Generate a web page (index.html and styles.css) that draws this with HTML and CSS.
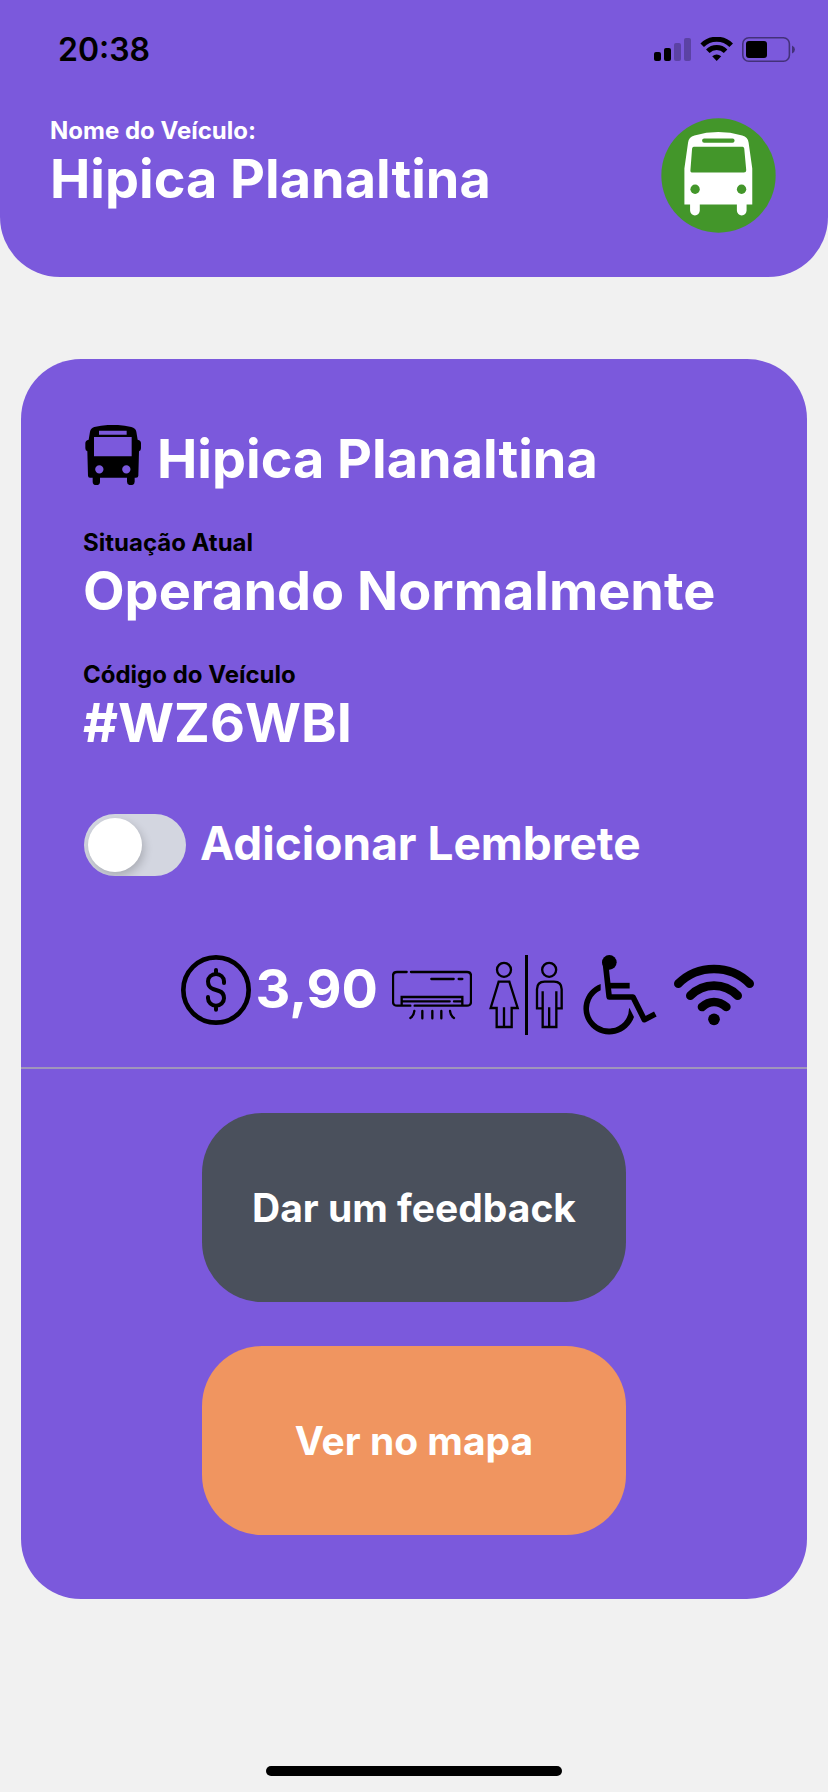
FILE: index.html
```
<!DOCTYPE html>
<html lang="pt-BR">
<head>
<meta charset="utf-8">
<meta name="viewport" content="width=device-width, initial-scale=1">
<title>Hipica Planaltina</title>
<link rel="stylesheet" href="styles.css">
</head>
<body class="screen">
<header class="header">
  <div class="status">
    <time class="status-time">20:38</time>
    <svg class="status-icons" viewBox="0 0 142 26" aria-hidden="true">
      <rect x="0" y="15" width="7" height="9" rx="2"/>
      <rect x="10" y="11" width="7" height="13" rx="2"/>
      <g opacity=".25"><rect x="20" y="6" width="7" height="18" rx="2"/><rect x="30" y="1" width="7" height="23" rx="2"/></g>
      <path d="M48.200 8.200A20.500 20.500 0 0 1 77.200 8.200" fill="none" stroke="#000" stroke-width="5"/>
      <path d="M53.800 14.200A12.600 12.600 0 0 1 71.600 14.200" fill="none" stroke="#000" stroke-width="5"/>
      <path d="M58.200 19.200Q62.700 15.600 67.200 19.200L62.700 24Z"/>
      <rect x="88.800" y=".8" width="46.600" height="23.400" rx="6" fill="none" stroke="#000" stroke-width="1.600" opacity=".45"/>
      <path d="M138 8.500Q141 10 141 12.500Q141 15 138 16.500Z" opacity=".45"/>
      <rect x="92" y="4" width="21" height="17" rx="3"/>
    </svg>
  </div>
  <div class="vehicle">
    <div>
      <p class="label label-light">Nome do Veículo:</p>
      <h1 class="title">Hipica Planaltina</h1>
    </div>
    <svg class="badge" viewBox="183 355 344 344" role="img" aria-label="Ônibus">
      <circle cx="355" cy="527" r="171" fill="#43962a"/>
      <path fill="#fff" d="M253 614V506L264 428Q266 412 283 407Q354 387 426 407Q443 412 445 428L456 506V614H439V632A14.500 14.500 0 0 1 410 632V614H299V632A14.500 14.500 0 0 1 270 632V614Z"/>
      <g fill="#43962a"><rect x="306" y="416" width="97" height="13" rx="6"/><path d="M281 441H427Q431 441 432 446L438 511Q438 518 431 518H278Q270 518 271 511L276 446Q277 441 281 441Z"/><circle cx="285" cy="568" r="14"/><circle cx="424" cy="568" r="14"/></g>
    </svg>
  </div>
</header>

<main class="card">
  <section class="details">
    <div class="route">
      <svg class="route-icon" viewBox="252 255 180 180" aria-hidden="true">
        <path fill-rule="evenodd" d="M286 261Q342 248 397 261Q410 265 412 275L416 299Q426 301 426 310V325Q426 332 420 334L418 407Q418 413 411 413H407V425A11 10 0 0 1 384 425V413H303V425A11 10 0 0 1 281 425V413H273Q267 413 267 407L265 334Q259 332 259 325V310Q259 301 269 299L273 275Q275 265 286 261ZM300 272V284H383V272ZM285 291V349H398V291ZM301 375.500A12.500 12.500 0 1 0 301 400.500A12.500 12.500 0 1 0 301 375.500ZM382 375.500A12.500 12.500 0 1 0 382 400.500A12.500 12.500 0 1 0 382 375.500Z"/>
      </svg>
      <h2 class="title">Hipica Planaltina</h2>
    </div>
    <div>
      <p class="label">Situação Atual</p>
      <p class="title">Operando Normalmente</p>
    </div>
    <div>
      <p class="label">Código do Veículo</p>
      <p class="title">#WZ6WBI</p>
    </div>
  </section>

  <div class="reminder">
    <input class="switch" type="checkbox" role="switch" id="reminder">
    <label class="reminder-label" for="reminder">Adicionar Lembrete</label>
  </div>

  <div class="amenities">
    <div class="fare">
      <svg class="fare-icon" viewBox="66 75 210 210" aria-hidden="true" fill="none" stroke="#000" stroke-width="12" stroke-linecap="round">
        <circle cx="171" cy="180" r="98" stroke-width="14"/>
        <path d="M195 159V154A24 22 0 0 0 171 132A24 22 0 0 0 147 154Q147 172 162 177L180 183Q195 188 195 205A24 22 0 0 1 171 227A24 22 0 0 1 147 205V201M171 120V132M171 228V239"/>
      </svg>
      <span class="title">3,90</span>
    </div>
    <svg class="amenity" viewBox="66 75 240 240" role="img" aria-label="Ar-condicionado" fill="none" stroke="#000" stroke-width="7" stroke-linecap="round">
      <path d="M110 126H81Q69 126 69 138V215Q69 227 81 227H121M123 126H291Q303 126 303 138V215Q303 227 291 227H134M95 226V201H277V226M97 214H239M252 214H276M184 147H251M266 147H277"/>
      <path d="M133 243Q131 258 121 264M157 243V265M187 243V265M214 243V265M240 243Q242 258 252 264"/>
    </svg>
    <svg class="amenity" viewBox="348 75 240 240" role="img" aria-label="Banheiro" fill="none" stroke="#000" stroke-width="7">
      <path d="M469.500 75V315" stroke-width="9"/>
      <circle cx="402" cy="119.500" r="21"/><circle cx="537.500" cy="119.500" r="21"/>
      <path d="M386 155H418L443 234H425V291H380V234H362ZM402 232V291M518 184V291H559V184M537.500 232V291M518 235H501V178Q501 155 524 155H552Q575 155 575 178V235H559"/>
    </svg>
    <svg class="amenity" viewBox="60 75 240 240" role="img" aria-label="Acessível para cadeirantes" fill="none" stroke="#000" stroke-width="17">
      <circle cx="148" cy="97" r="22" fill="#000" stroke="none"/>
      <path d="M136 97L147.500 201H219L253 269L286 252" stroke-linejoin="round"/>
      <path d="M149 167H209"/>
      <path d="M122 162V181A60 60 0 1 0 207 237L208 233L222 261A78 78 0 1 1 122 162Z" fill="#000" stroke="none"/>
    </svg>
    <svg class="amenity" viewBox="342 75 240 240" role="img" aria-label="Wi-Fi" fill="none" stroke="#000" stroke-width="26" stroke-linecap="round">
      <path d="M355 161Q399 117 462 117Q525 117 569 161M391 197Q421 167 462 167Q503 167 533 197M426 231Q442 216 462 216Q482 216 499 231"/>
      <circle cx="462" cy="268" r="17.500" fill="#000" stroke="none"/>
    </svg>
  </div>

  <div class="actions">
    <button class="action action-feedback" type="button">Dar um feedback</button>
    <button class="action action-map" type="button">Ver no mapa</button>
  </div>
</main>
<div class="home-bar"></div>
</body>
</html>
```
FILE: styles.css
```
* {
  box-sizing: border-box;
}

.screen {
  display: flex;
  flex-direction: column;
  min-height: 100vh;
  margin: 0;
  background: #f1f1f1;
  color: #000;
  font-family: Inter, "Liberation Sans", sans-serif;
}

.header {
  padding: 30px 52px 44px 50px;
  border-radius: 0 0 60px 60px;
  background: #7b59dc;
}

.status {
  display: flex;
  justify-content: space-between;
  align-items: center;
  padding: 0 0 0 8px;
  margin-right: -20px;
}

.status-time {
  font-size: 32px;
  line-height: 40px;
  font-weight: 600;
}

.status-icons {
  width: 142px;
  height: 26px;
}

.vehicle {
  display: flex;
  justify-content: space-between;
  align-items: flex-start;
  padding-top: 47px;
}

.badge {
  width: 115px;
  height: 115px;
  margin-top: 1px;
}

.label,
.title {
  margin: 0;
  font-weight: 700;
}

.label {
  font-size: 24px;
  line-height: 28px;
}

.label-light,
.title {
  color: #fff;
}

.title {
  font-size: 54px;
  line-height: 68px;
}

.card {
  margin: 82px 21px 0;
  border-radius: 60px;
  background: #7b59dc;
}

.details {
  display: flex;
  flex-direction: column;
  gap: 36px;
  padding: 66px 0 0 62px;
}

.route {
  display: flex;
  gap: 14px;
}

.route-icon {
  width: 60px;
  height: 60px;
}

.reminder {
  display: flex;
  align-items: flex-start;
  gap: 14px;
  padding: 57px 0 0 63px;
}

.switch {
  appearance: none;
  width: 102px;
  height: 62px;
  margin: 0;
  padding: 4px;
  border-radius: 31px;
  background: #d3d6e0;
  overflow: hidden;
}

.switch::before {
  content: "";
  display: block;
  width: 54px;
  height: 54px;
  border-radius: 50%;
  background: #fff;
  box-shadow: 2px 4px 10px rgba(0, 0, 0, 0.2);
}

.switch:checked::before {
  margin-left: auto;
}

.reminder-label {
  color: #fff;
  font-size: 46px;
  line-height: 58px;
  font-weight: 700;
}

.amenities {
  display: flex;
  justify-content: flex-end;
  align-items: flex-start;
  gap: 14px;
  padding: 79px 53px 32px 0;
  border-bottom: 2px solid #a096ba;
}

.fare {
  display: flex;
  gap: 4px;
}

.fare-icon {
  width: 70px;
  height: 70px;
}

.amenity {
  width: 80px;
  height: 80px;
}

.actions {
  display: flex;
  flex-direction: column;
  align-items: center;
  gap: 44px;
  padding: 44px 0 64px;
}

.action {
  width: 54%;
  padding: 71px 20px 70px;
  border: 0;
  border-radius: 60px;
  color: #fff;
  font: 700 39px/48px Inter, "Liberation Sans", sans-serif;
}

.action-feedback {
  background: #4a505c;
}

.action-map {
  background: #f09560;
}

.home-bar {
  width: 296px;
  height: 10px;
  margin: auto auto 16px;
  border-radius: 5px;
  background: #000;
}
```
